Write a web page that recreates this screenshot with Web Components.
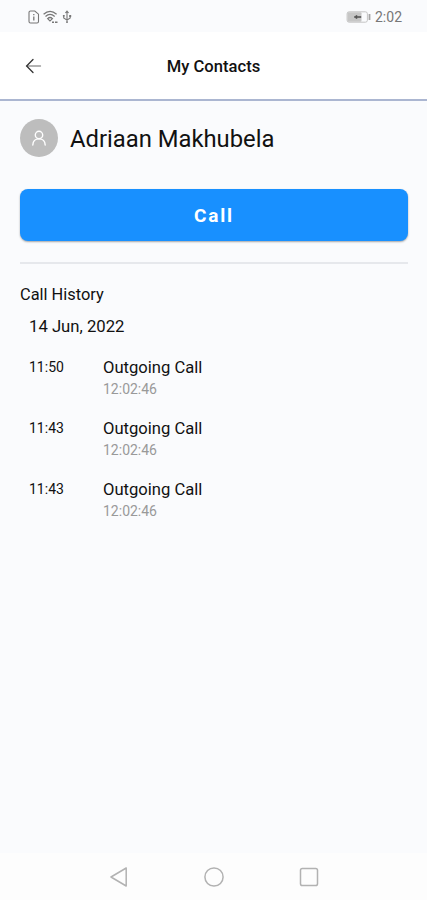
<!DOCTYPE html>
<html lang="en">
<head>
<meta charset="utf-8">
<meta name="viewport" content="width=device-width, initial-scale=1">
<title>My Contacts</title>
<style>
  html, body { height: 100%; margin: 0; }
  body { font-family: Roboto, sans-serif; color: #111; background: #fafbfd; overflow: hidden; }
</style>
</head>
<body>
<contact-screen>
  <status-bar slot="top" time="2:02"></status-bar>
  <app-header slot="top">My Contacts</app-header>
  <contact-name>Adriaan Makhubela</contact-name>
  <call-button>Call</call-button>
  <call-history heading="Call History" date="14 Jun, 2022">
    <call-entry time="11:50" duration="12:02:46">Outgoing Call</call-entry>
    <call-entry time="11:43" duration="12:02:46">Outgoing Call</call-entry>
    <call-entry time="11:43" duration="12:02:46">Outgoing Call</call-entry>
  </call-history>
  <nav-bar slot="bottom"></nav-bar>
</contact-screen>

<script>
/* Base class: every component only has to return its markup */
class BaseElement extends HTMLElement {
  constructor() {
    super();
    this.attachShadow({ mode: 'open' });
  }
  connectedCallback() {
    this.shadowRoot.innerHTML = this.template();
  }
}

/* Full-height screen: bars on top and bottom, content between */
class ContactScreen extends BaseElement {
  template() {
    return `
      <style>
        :host { display: flex; flex-direction: column; height: 100%; }
        main { flex: 1; padding: 18px 19px 0 20px; }
      </style>
      <slot name="top"></slot>
      <main><slot></slot></main>
      <slot name="bottom"></slot>`;
  }
}

class StatusBar extends BaseElement {
  template() {
    return `
      <style>
        :host {
          display: flex;
          align-items: center;
          justify-content: space-between;
          box-sizing: border-box;
          height: 32px;
          padding: 1px 25px 0 28px;
          color: #777;
        }
        .left { display: flex; gap: 3px; }
        .right { display: flex; align-items: center; gap: 4px; }
        .time { font-size: 14px; line-height: 16px; }
        svg { display: block; fill: none; stroke: currentColor; }
      </style>
      <div class="left">
        <svg width="12" height="14" viewBox="0 0 12 14" stroke-width="1.1">
          <path d="M2.5 1h4.3L10.5 4.200V11.500a1.500 1.500 0 0 1-1.500 1.500H2.500A1.500 1.500 0 0 1 1 11.500v-9A1.500 1.500 0 0 1 2.500 1z"/>
          <path d="M5.800 4v1.200M5.800 6.500v4" stroke-width="1.300"/>
        </svg>
        <svg width="15" height="14" viewBox="0 0 15 14" stroke-width="1.200">
          <path d="M.6 4.300Q7 -1.700 13.600 4.300M2.500 6.500Q7 2.300 11.700 6.500M4.600 8.600Q7 6.400 9.500 8.600L7 11z"/>
          <path d="M9 12.200h2M12 12.200h2.500" stroke-width="1.500"/>
        </svg>
        <svg width="12" height="14" viewBox="0 0 12 14" stroke-width="1.100">
          <path d="M6 1.500v11.500M2.700 6v2L6 10.200 9.200 8V5.800M4.400 3L6 1.200 7.600 3"/>
          <path d="M1.900 5h1.800v1.600H1.900zM8.200 5h2v2H8.200zM5.300 11.500h1.400v1.300H5.300z" fill="currentColor" stroke="none"/>
        </svg>
      </div>
      <div class="right">
        <svg width="25" height="12" viewBox="0 0 25 12">
          <rect x="1.100" y=".8" width="20.300" height="10.400" rx="2" stroke="#c4c4c4"/>
          <rect x="1.500" y="1.200" width="14" height="9.600" rx="1" fill="#c6c6c6" stroke="none"/>
          <path d="M8 6l3-1.700v1.200h4v1h-4v1.200z" fill="#555" stroke="#555" stroke-width=".6"/>
          <path d="M23.500 3v6" stroke="#a5a5a5" stroke-width="1.800"/>
        </svg>
        <span class="time">${this.getAttribute('time')}</span>
      </div>`;
  }
}

class AppHeader extends BaseElement {
  template() {
    return `
      <style>
        :host {
          display: grid;
          grid-template-columns: 60px 1fr 60px;
          align-items: center;
          box-sizing: border-box;
          height: 69px;
          border-bottom: 2px solid #abb6d1;
          background: #fff;
        }
        svg { display: block; margin-left: 25px; fill: none; stroke: #333; stroke-linecap: round; }
        h1 {
          margin: 0;
          padding-top: 2px;
          text-align: center;
          font-size: 16.600px;
          line-height: 20px;
          font-weight: 500;
        }
      </style>
      <svg width="17" height="16" viewBox="0 0 17 16" stroke-width="1.300">
        <path d="M2 8h13.500" stroke="#999"/>
        <path d="M8 1.500L1.600 8 8 14.500"/>
      </svg>
      <h1><slot></slot></h1>`;
  }
}

class ContactName extends BaseElement {
  template() {
    return `
      <style>
        :host { display: flex; align-items: center; gap: 12px; height: 38px; }
        .avatar {
          display: flex;
          align-items: center;
          justify-content: center;
          width: 38px;
          height: 38px;
          border-radius: 50%;
          background: #bdbdbd;
        }
        svg { fill: none; stroke: #fff; stroke-width: 1.400; stroke-linecap: round; }
        h2 { margin: 0; padding-top: 2px; font-size: 23.800px; line-height: 30px; font-weight: 400; }
      </style>
      <span class="avatar">
        <svg width="16" height="16" viewBox="0 0 16 16">
          <circle cx="8" cy="5" r="3.700"/>
          <path d="M1.800 15C2 11.200 4.600 8.900 8 8.900s6 2.300 6.200 6.100"/>
        </svg>
      </span>
      <h2><slot></slot></h2>`;
  }
}

class CallButton extends BaseElement {
  template() {
    return `
      <style>
        :host {
          display: block;
          margin-top: 32px;
          padding-bottom: 21px;
          border-bottom: 2px solid #e6e8ec;
        }
        button {
          display: block;
          width: 100%;
          height: 52px;
          padding: 2px 0 0;
          border: 0;
          border-radius: 8px;
          background: #1890ff;
          box-shadow: 0 1px 2px rgba(0, 0, 0, .35);
          color: #fff;
          font: 700 19px/24px Roboto, sans-serif;
          letter-spacing: 1.800px;
        }
      </style>
      <button><slot></slot></button>`;
  }
}

class CallHistory extends BaseElement {
  template() {
    return `
      <style>
        :host { display: block; padding-top: 21px; }
        h3, h4 { margin: 0; font-weight: 400; font-size: 16.400px; line-height: 20px; }
        h4 { margin: 12px 0 20px 9px; font-size: 16.700px; }
        .list { display: grid; gap: 18px; padding-left: 9px; }
      </style>
      <h3>${this.getAttribute('heading')}</h3>
      <h4>${this.getAttribute('date')}</h4>
      <div class="list"><slot></slot></div>`;
  }
}

class CallEntry extends BaseElement {
  template() {
    return `
      <style>
        :host { display: grid; grid-template-columns: 74px 1fr; height: 43px; }
        .time { font-size: 14px; line-height: 20px; }
        .kind { font-size: 16.600px; line-height: 22px; }
        .duration { color: #999; font-size: 14px; line-height: 20px; }
      </style>
      <div class="time">${this.getAttribute('time')}</div>
      <div>
        <div class="kind"><slot></slot></div>
        <div class="duration">${this.getAttribute('duration')}</div>
      </div>`;
  }
}

/* System navigation: back, home, recents */
class NavBar extends BaseElement {
  template() {
    return `
      <style>
        :host {
          display: flex;
          align-items: center;
          justify-content: center;
          gap: 75px;
          height: 47px;
          background: #fdfdfd;
        }
        svg { fill: none; stroke: #b2b2b2; stroke-width: 1.500; stroke-linejoin: round; }
      </style>
      <svg width="20" height="20" viewBox="0 0 20 20"><path d="M17.200 1v18L2 10z"/></svg>
      <svg width="20" height="20" viewBox="0 0 20 20"><circle cx="10" cy="10" r="9.100"/></svg>
      <svg width="20" height="20" viewBox="0 0 20 20"><rect x="1.500" y="1.500" width="17" height="17" rx="1.800"/></svg>`;
  }
}

customElements.define('contact-screen', ContactScreen);
customElements.define('status-bar', StatusBar);
customElements.define('app-header', AppHeader);
customElements.define('contact-name', ContactName);
customElements.define('call-button', CallButton);
customElements.define('call-history', CallHistory);
customElements.define('call-entry', CallEntry);
customElements.define('nav-bar', NavBar);
</script>
</body>
</html>
